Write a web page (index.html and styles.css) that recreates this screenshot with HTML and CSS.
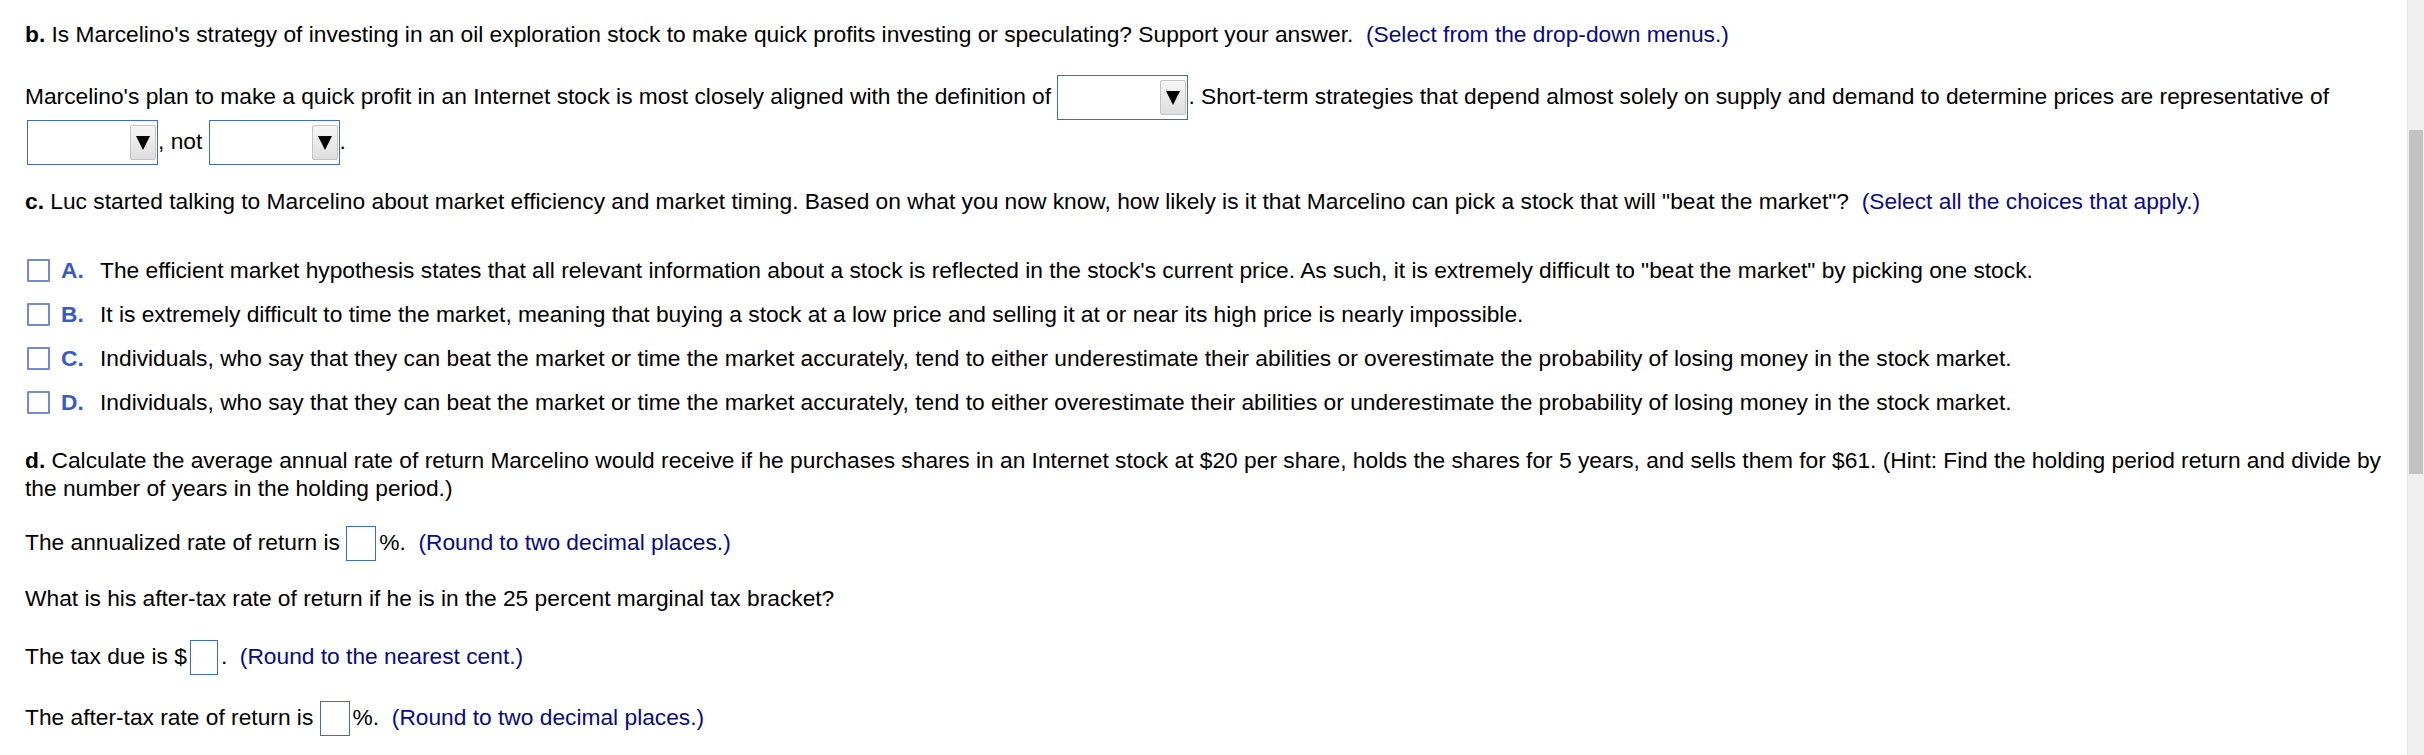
FILE: index.html
```html
<!DOCTYPE html>
<html>
<head>
<meta charset="utf-8">
<link rel="stylesheet" href="styles.css">
</head>
<body>
<div class="page">
  <main class="content">
    <p class="q q-b"><b>b.</b> Is Marcelino's strategy of investing in an oil exploration stock to make quick profits investing or speculating? Support your answer.&nbsp; <span class="hint">(Select from the drop-down menus.)</span></p>

    <p class="q q-dd">Marcelino's plan to make a quick profit in an Internet stock is most closely aligned with the definition of <span class="dd"><span class="dd-btn"><svg width="14" height="14" viewBox="0 0 14 14"><polygon points="0,0 14,0 7,14" fill="#000"/></svg></span></span>. Short-term strategies that depend almost solely on supply and demand to determine prices are representative of <span class="dd dd-first"><span class="dd-btn"><svg width="14" height="14" viewBox="0 0 14 14"><polygon points="0,0 14,0 7,14" fill="#000"/></svg></span></span>, not <span class="dd"><span class="dd-btn"><svg width="14" height="14" viewBox="0 0 14 14"><polygon points="0,0 14,0 7,14" fill="#000"/></svg></span></span>.</p>

    <p class="q q-c"><b>c.</b> Luc started talking to Marcelino about market efficiency and market timing. Based on what you now know, how likely is it that Marcelino can pick a stock that will "beat the market"?&nbsp; <span class="hint">(Select all the choices that apply.)</span></p>

    <div class="choices">
      <div class="choice"><span class="cb"></span><span class="letter">A.</span><span class="ctext">The efficient market hypothesis states that all relevant information about a stock is reflected in the stock's current price. As such, it is extremely difficult to "beat the market" by picking one stock.</span></div>
      <div class="choice"><span class="cb"></span><span class="letter">B.</span><span class="ctext">It is extremely difficult to time the market, meaning that buying a stock at a low price and selling it at or near its high price is nearly impossible.</span></div>
      <div class="choice"><span class="cb"></span><span class="letter">C.</span><span class="ctext">Individuals, who say that they can beat the market or time the market accurately, tend to either underestimate their abilities or overestimate the probability of losing money in the stock market.</span></div>
      <div class="choice"><span class="cb"></span><span class="letter">D.</span><span class="ctext">Individuals, who say that they can beat the market or time the market accurately, tend to either overestimate their abilities or underestimate the probability of losing money in the stock market.</span></div>
    </div>

    <p class="q q-d"><b>d.</b> Calculate the average annual rate of return Marcelino would receive if he purchases shares in an Internet stock at $20 per share, holds the shares for 5 years, and sells them for $61. (Hint: Find the holding period return and divide by the number of years in the holding period.)</p>

    <p class="q q-ann">The annualized rate of return is <span class="box"></span>%.&nbsp; <span class="hint">(Round to two decimal places.)</span></p>

    <p class="q q-what">What is his after-tax rate of return if he is in the 25 percent marginal tax bracket?</p>

    <p class="q q-tax">The tax due is $<span class="box box-tax"></span>.&nbsp; <span class="hint">(Round to the nearest cent.)</span></p>

    <p class="q q-after">The after-tax rate of return is <span class="box"></span>%.&nbsp; <span class="hint">(Round to two decimal places.)</span></p>
  </main>
  <div class="scrollbar"><div class="thumb"></div></div>
</div>
</body>
</html>
```

FILE: styles.css
```css
html, body {
  margin: 0;
  padding: 0;
  background: #fff;
}

body {
  font-family: "Liberation Sans", Arial, sans-serif;
  font-size: 22.75px;
  color: #000;
  overflow: hidden;
}

.page {
  display: flex;
  width: 2424px;
  height: 755px;
}

.content {
  flex: 1;
  padding: 20px 12px 0 25px;
  min-width: 0;
}

.q {
  margin: 0;
  line-height: 28px;
}

.hint {
  color: #0a0a80;
}

.q-dd {
  margin-top: 27px;
}

.dd {
  display: inline-flex;
  justify-content: flex-end;
  align-items: center;
  box-sizing: border-box;
  width: 131px;
  height: 45px;
  border: 1px solid #3b6bcb;
  background: #fff;
  vertical-align: middle;
  padding-right: 1px;
}

.dd-first {
  margin-left: 2px;
}

.dd-btn {
  display: flex;
  align-items: center;
  justify-content: center;
  box-sizing: border-box;
  width: 26px;
  height: 35px;
  border: 1px solid #c4c4c4;
  border-radius: 2px;
  background: linear-gradient(#f6f6f6, #dedede);
}

.q-c {
  margin-top: 22px;
}

.choices {
  margin-top: 33px;
}

.choice {
  display: flex;
  align-items: center;
  height: 44px;
  line-height: 28px;
}

.cb {
  box-sizing: border-box;
  width: 23px;
  height: 23px;
  margin-left: 2px;
  border: 2px solid #7389d6;
  border-radius: 1px;
  background: #fff;
  flex: none;
}

.letter {
  width: 39px;
  margin-left: 11px;
  color: #3b58c6;
  font-weight: bold;
  flex: none;
}

.q-d {
  margin-top: 22px;
}

.box {
  display: inline-block;
  box-sizing: border-box;
  width: 30px;
  height: 35px;
  border: 1px solid #3b6bcb;
  background: #fff;
  vertical-align: middle;
  margin-right: 3px;
}

.box-tax {
  width: 28px;
  margin-left: 3px;
}

.q-ann {
  margin-top: 24px;
}

.q-what {
  margin-top: 23px;
}

.q-tax {
  margin-top: 28px;
}

.q-after {
  margin-top: 26px;
}

.scrollbar {
  flex: none;
  width: 17px;
  height: 755px;
  box-sizing: border-box;
  background: #f0f0f0;
  border-left: 1px solid #e6e6e6;
  padding: 130px 1px 0 1px;
}

.thumb {
  height: 344px;
  background: #c1c1c1;
}
```
